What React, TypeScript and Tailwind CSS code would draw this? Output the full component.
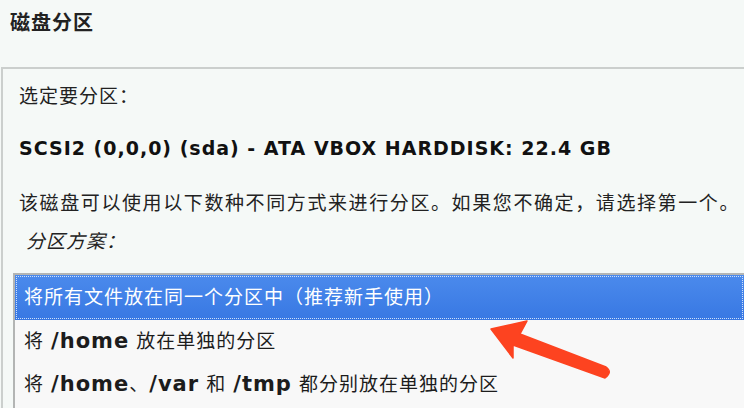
const FONT = { fontFamily: '"DejaVu Sans", "Noto Sans CJK SC", sans-serif' };

function Row({ children, selected }: { children: React.ReactNode; selected?: boolean }) {
  if (selected) {
    return (
      <div className="h-[45px] flex items-center pl-[9px] text-white bg-gradient-to-b from-[#4b8aec] to-[#3878e3] outline-1 outline-dotted outline-[#cfe0fa] -outline-offset-2">
        {children}
      </div>
    );
  }
  return <div className="h-[43px] flex items-center pl-[9px] text-[#1c1c1c] whitespace-pre">{children}</div>;
}

export default function App() {
  return (
    <div className="relative w-[744px] h-[408px] overflow-hidden bg-[#f5f9f7]" style={FONT}>
      <div className="h-[67px] pl-[10px] pt-[8px]">
        <h1 className="text-[20px] font-bold tracking-[1px] text-[#222]">磁盘分区</h1>
      </div>

      <div className="ml-[1px] border-t-2 border-l-2 border-[#cbcfcd] pl-[16px] pt-[13px] text-[#222]">
        <p className="text-[19px] tracking-[1px] h-[28px] leading-[28px]">选定要分区：</p>
        <p className="mt-[24px] text-[19px] font-bold tracking-[1px] h-[28px] leading-[28px] text-[#111]">
          SCSI2 (0,0,0) (sda) - ATA VBOX HARDDISK: 22.4 GB
        </p>
        <p className="mt-[27px] text-[19px] tracking-[1.6px] h-[28px] leading-[28px] whitespace-nowrap">
          该磁盘可以使用以下数种不同方式来进行分区。如果您不确定，请选择第一个。
        </p>
        <p className="mt-[10px] ml-[7px] text-[19px] italic tracking-[1px] h-[28px] leading-[28px]">分区方案：</p>

        <div className="mt-[18px] -ml-[6px] border-t-2 border-l-2 border-[#b3b5b4] bg-[#f8f8f8] text-[19px] tracking-[1px] h-[200px]">
          <Row selected>将所有文件放在同一个分区中（推荐新手使用）</Row>
          <Row>
            {'将 '}
            <b className="text-[21px] font-bold">/home</b>
            {' 放在单独的分区'}
          </Row>
          <Row>
            {'将 '}
            <b className="text-[21px] font-bold">/home</b>
            {'、'}
            <b className="text-[21px] font-bold">/var</b>
            {' 和 '}
            <b className="text-[21px] font-bold">/tmp</b>
            {' 都分别放在单独的分区'}
          </Row>
        </div>
      </div>

      <svg className="absolute left-0 top-0 pointer-events-none" width="744" height="408" viewBox="0 0 744 408">
        <path
          d="M491 329 L527 321 L520 334 L606 367 Q613 372 605 378 L513 345 L513 358 Z"
          fill="#fd4320"
          stroke="#fd4320"
          strokeWidth="1.5"
          strokeLinejoin="round"
        />
      </svg>
    </div>
  );
}
